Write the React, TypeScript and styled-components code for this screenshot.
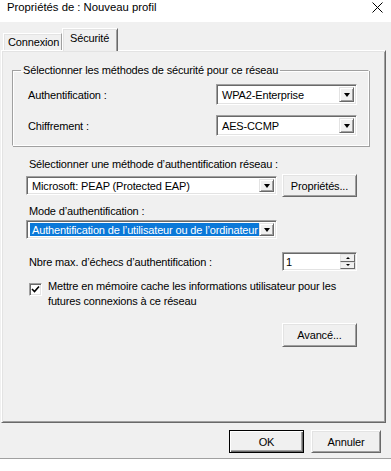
import React from 'react';
import styled, { createGlobalStyle } from 'styled-components';

const GlobalStyle = createGlobalStyle`
  html, body { margin: 0; padding: 0; background: #ffffff; }
  body {
    font-family: "Liberation Sans", Arial, sans-serif;
    font-size: 11px;
    color: #000;
  }
  * { box-sizing: border-box; }
`;

const Window = styled.div`
  width: 391px;
  height: 471px;
  display: flex;
  flex-direction: column;
  background: #fff;
  overflow: hidden;
`;

const TitleBar = styled.div`
  height: 22px;
  flex: none;
  display: flex;
  align-items: flex-start;
  justify-content: space-between;
  padding: 1px 8px 0 7px;
  background: #fff;
`;

const Title = styled.span`
  font-size: 11.3px;
  line-height: 13px;
  color: #000;
`;

const CloseIcon = styled.svg`
  margin-top: 1px;
  width: 11px;
  height: 11px;
`;

const Body = styled.div`
  height: 437px;
  flex: none;
  background: #f0f0f0;
  border-bottom: 1px solid #a0a0a0;
  display: flex;
  flex-direction: column;
  padding: 6px 0 0 1px;
  letter-spacing: -0.15px;
`;

const TabStrip = styled.div`
  display: flex;
  align-items: flex-end;
  height: 22px;
  padding-left: 2px;
  position: relative;
  z-index: 1;
`;

const Tab = styled.div<{ $active?: boolean }>`
  height: ${p => (p.$active ? '23px' : '17px')};
  margin-bottom: ${p => (p.$active ? '-1px' : '0')};
  padding: ${p => (p.$active ? '3px 7px 0 7px' : '2px 4px 0 4px')};
  width: ${p => (p.$active ? '56px' : '59px')};
  background: #f0f0f0;
  border-top: 1px solid #ffffff;
  border-left: 1px solid #ffffff;
  border-right: 1px solid ${p => (p.$active ? '#696969' : '#a0a0a0')};
  box-shadow: ${p => (p.$active ? 'inset 1px 1px #e3e3e3, inset -1px 0 #a0a0a0' : 'inset 1px 1px #e3e3e3')};
  white-space: nowrap;
  font-size: 11px;
  line-height: 13px;
`;

const Panel = styled.div`
  width: 385px;
  height: 373px;
  flex: none;
  background: #f0f0f0;
  border-top: 1px solid #ffffff;
  border-left: 1px solid #ffffff;
  border-right: 1px solid #696969;
  border-bottom: 1px solid #696969;
  box-shadow: inset 1px 1px #e3e3e3, inset -1px -1px #a0a0a0;
  display: flex;
  flex-direction: column;
  padding: 13px 0 0 0;
`;

const GroupBox = styled.fieldset`
  margin: 0 16px 0 10px;
  padding: 7px 11px 9px 15px;
  border: 1px solid;
  border-color: #a0a0a0 #ffffff #ffffff #a0a0a0;
  box-shadow: inset 1px 1px #ffffff, 1px 1px #a0a0a0;
  min-width: 0;
  display: flex;
  flex-direction: column;
  gap: 10px;
`;

const Legend = styled.legend`
  padding: 0 2px;
  margin-left: -7px;
  font-size: 11px;
  line-height: 13px;
`;

const FieldRow = styled.div<{ $top?: number; $end?: boolean }>`
  display: flex;
  align-items: center;
  justify-content: ${p => (p.$end ? 'flex-end' : 'space-between')};
  margin-top: ${p => p.$top ?? 0}px;
`;

const Label = styled.span<{ $top?: number }>`
  display: block;
  font-size: 11px;
  line-height: 14px;
  margin-top: ${p => p.$top ?? 0}px;
`;

const Combo = styled.div<{ $w: number; $h?: number }>`
  width: ${p => p.$w}px;
  height: ${p => p.$h ?? 21}px;
  flex: none;
  background: #fff;
  border: 1px solid;
  border-color: #a0a0a0 #ffffff #ffffff #a0a0a0;
  box-shadow: inset 1px 1px #696969, inset -1px -1px #e3e3e3;
  display: flex;
  align-items: center;
  padding: 2px 2px 2px 3px;
`;

const ComboText = styled.span<{ $selected?: boolean }>`
  flex: 1;
  min-width: 0;
  height: 100%;
  display: flex;
  align-items: center;
  padding-left: 2px;
  white-space: nowrap;
  overflow: hidden;
  background: ${p => (p.$selected ? '#0a78d8' : 'transparent')};
  color: ${p => (p.$selected ? '#ffffff' : '#000')};
  font-size: 11px;
`;

const ArrowButton = styled.div`
  width: 15px;
  height: 100%;
  flex: none;
  background: #f0f0f0;
  border: 1px solid;
  border-color: #e3e3e3 #696969 #696969 #e3e3e3;
  box-shadow: inset 1px 1px #ffffff, inset -1px -1px #a0a0a0;
  display: flex;
  align-items: center;
  justify-content: center;
`;

const Triangle = styled.span`
  width: 0;
  height: 0;
  border-left: 3.5px solid transparent;
  border-right: 3.5px solid transparent;
  border-top: 4px solid #000;
`;

const Content = styled.div`
  display: flex;
  flex-direction: column;
  padding: 0 28px 0 24px;
`;

const PushButton = styled.button<{ $w: number; $h?: number; $default?: boolean }>`
  width: ${p => p.$w}px;
  height: ${p => p.$h ?? 23}px;
  flex: none;
  font-family: "Liberation Sans", Arial, sans-serif;
  font-size: 11px;
  letter-spacing: -0.15px;
  color: #000;
  background: #f0f0f0;
  border: 1px solid;
  border-color: ${p => (p.$default ? '#000' : '#ffffff #696969 #696969 #ffffff')};
  box-shadow: ${p =>
    p.$default
      ? 'inset 1px 1px #ffffff, inset -1px -1px #696969, inset -2px -2px #a0a0a0'
      : 'inset 1px 1px #e3e3e3, inset -1px -1px #a0a0a0'};
  padding: 0;
  cursor: default;
`;

const SpinBox = styled.div`
  width: 75px;
  height: 19px;
  flex: none;
  background: #fff;
  border: 1px solid;
  border-color: #a0a0a0 #ffffff #ffffff #a0a0a0;
  box-shadow: inset 1px 1px #696969, inset -1px -1px #e3e3e3;
  display: flex;
  align-items: stretch;
  padding: 1px 1px 1px 3px;
`;

const SpinValue = styled.span`
  flex: 1;
  display: flex;
  align-items: center;
  font-size: 11px;
`;

const SpinArrows = styled.div`
  width: 15px;
  display: flex;
  flex-direction: column;
`;

const SpinHalf = styled.div<{ $up?: boolean }>`
  flex: 1;
  background: #f0f0f0;
  border: 1px solid;
  border-color: #e3e3e3 #696969 #696969 #e3e3e3;
  display: flex;
  align-items: center;
  justify-content: center;
  &::after {
    content: '';
    width: 0;
    height: 0;
    border-left: 2px solid transparent;
    border-right: 2px solid transparent;
    ${p => (p.$up ? 'border-bottom: 2px solid #000;' : 'border-top: 2px solid #000;')}
  }
`;

const CheckRow = styled.div`
  display: flex;
  align-items: flex-start;
  gap: 6px;
  margin-top: 8px;
  padding-left: 3px;
`;

const CheckBox = styled.div`
  width: 13px;
  height: 13px;
  flex: none;
  margin-top: 4px;
  background: #fff;
  border: 1px solid;
  border-color: #a0a0a0 #ffffff #ffffff #a0a0a0;
  box-shadow: inset 1px 1px #696969, inset -1px -1px #e3e3e3;
  display: flex;
  align-items: center;
  justify-content: center;
`;

const CheckText = styled.span`
  font-size: 11px;
  line-height: 15px;
`;

const Footer = styled.div`
  display: flex;
  justify-content: flex-end;
  gap: 7px;
  padding: 7px 10px 0 0;
`;

export default function App() {
  return (
    <>
      <GlobalStyle />
      <Window>
        <TitleBar>
          <Title>Propriétés de : Nouveau profil</Title>
          <CloseIcon viewBox="0 0 11 11">
            <path d="M0.5 0.5 L10.5 10.5 M10.5 0.5 L0.5 10.5" stroke="#000" strokeWidth="1" fill="none" />
          </CloseIcon>
        </TitleBar>
        <Body>
          <TabStrip>
            <Tab>Connexion</Tab>
            <Tab $active>Sécurité</Tab>
          </TabStrip>
          <Panel>
            <GroupBox>
              <Legend>Sélectionner les méthodes de sécurité pour ce réseau</Legend>
              <FieldRow>
                <Label>Authentification :</Label>
                <Combo $w={141}>
                  <ComboText>WPA2-Enterprise</ComboText>
                  <ArrowButton><Triangle /></ArrowButton>
                </Combo>
              </FieldRow>
              <FieldRow>
                <Label>Chiffrement :</Label>
                <Combo $w={141}>
                  <ComboText>AES-CCMP</ComboText>
                  <ArrowButton><Triangle /></ArrowButton>
                </Combo>
              </FieldRow>
            </GroupBox>
            <Content>
              <Label $top={11}>&nbsp;Sélectionner une méthode d’authentification réseau :</Label>
              <FieldRow $top={3}>
                <Combo $w={251} $h={19}>
                  <ComboText>Microsoft: PEAP (Protected EAP)</ComboText>
                  <ArrowButton><Triangle /></ArrowButton>
                </Combo>
                <PushButton $w={75}>Propriétés...</PushButton>
              </FieldRow>
              <Label $top={7}>&nbsp;Mode d’authentification :</Label>
              <FieldRow $top={2}>
                <Combo $w={251} $h={19}>
                  <ComboText $selected>Authentification de l’utilisateur ou de l’ordinateur</ComboText>
                  <ArrowButton><Triangle /></ArrowButton>
                </Combo>
              </FieldRow>
              <FieldRow $top={13}>
                <Label>&nbsp;Nbre max. d’échecs d’authentification :</Label>
                <SpinBox>
                  <SpinValue>1</SpinValue>
                  <SpinArrows>
                    <SpinHalf $up />
                    <SpinHalf />
                  </SpinArrows>
                </SpinBox>
              </FieldRow>
              <CheckRow>
                <CheckBox>
                  <svg width="9" height="9" viewBox="0 0 9 9">
                    <path d="M1 4 L3.5 6.5 L8 1.5" stroke="#000" strokeWidth="1.6" fill="none" />
                  </svg>
                </CheckBox>
                <CheckText>
                  Mettre en mémoire cache les informations utilisateur pour les
                  <br />
                  futures connexions à ce réseau
                </CheckText>
              </CheckRow>
              <FieldRow $top={14} $end>
                <PushButton $w={75} $h={24}>Avancé...</PushButton>
              </FieldRow>
            </Content>
          </Panel>
          <Footer>
            <PushButton $w={75} $default>OK</PushButton>
            <PushButton $w={70}>Annuler</PushButton>
          </Footer>
        </Body>
      </Window>
    </>
  );
}
